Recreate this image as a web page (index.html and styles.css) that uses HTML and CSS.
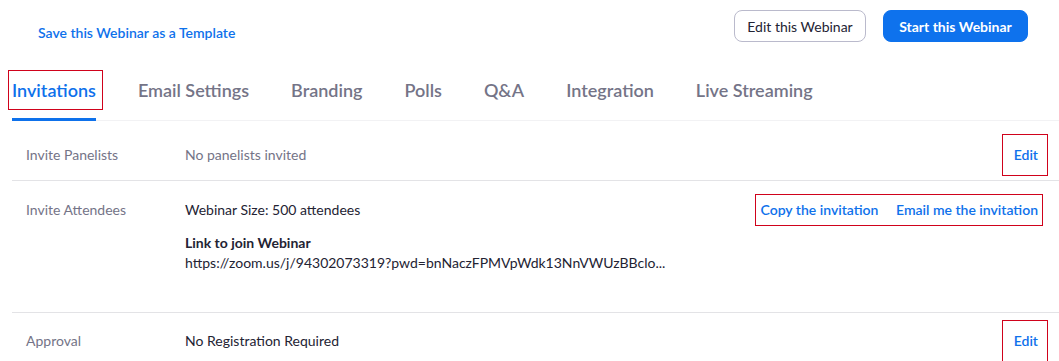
FILE: index.html
```html
<!DOCTYPE html>
<html lang="en">
<head>
  <meta charset="UTF-8">
  <meta name="viewport" content="width=device-width, initial-scale=1.0">
  <title>Webinar - Invitations</title>
  <link rel="stylesheet" href="styles.css">
</head>
<body>
  <div class="header">
    <a href="#" class="save-link">Save this Webinar as a Template</a>
    <div class="header-actions">
      <button class="btn btn-outline">Edit this Webinar</button>
      <button class="btn btn-primary">Start this Webinar</button>
    </div>
  </div>

  <div class="tabs">
    <a href="#" class="tab active"><span class="annot annot-tab">Invitations</span></a>
    <a href="#" class="tab">Email Settings</a>
    <a href="#" class="tab">Branding</a>
    <a href="#" class="tab">Polls</a>
    <a href="#" class="tab">Q&amp;A</a>
    <a href="#" class="tab">Integration</a>
    <a href="#" class="tab">Live Streaming</a>
  </div>

  <div class="row row-panelists">
    <div class="label">Invite Panelists</div>
    <div class="value muted">No panelists invited</div>
    <div class="actions"><span class="annot annot-edit"><a href="#">Edit</a></span></div>
  </div>

  <div class="row row-attendees">
    <div class="label">Invite Attendees</div>
    <div class="value">
      <div>Webinar Size: 500 attendees</div>
      <div class="join-title">Link to join Webinar</div>
      <div>https://zoom.us/j/94302073319?pwd=bnNaczFPMVpWdk13NnVWUzBBclo...</div>
    </div>
    <div class="actions">
      <span class="annot annot-links">
        <a href="#">Copy the invitation</a>
        <a href="#" class="second">Email me the invitation</a>
      </span>
    </div>
  </div>

  <div class="row row-approval">
    <div class="label">Approval</div>
    <div class="value">No Registration Required</div>
    <div class="actions"><span class="annot annot-edit"><a href="#">Edit</a></span></div>
  </div>
</body>
</html>
```

FILE: styles.css
```css
body {
  margin: 0;
  font-family: Lato, "Open Sans", Arial, sans-serif;
  font-size: 14px;
  color: #232333;
  background: #ffffff;
}

a {
  color: #0e71eb;
  text-decoration: none;
}

.header {
  display: flex;
  justify-content: space-between;
  align-items: flex-start;
  height: 52px;
  padding: 10px 31px 0 38px;
}

.save-link {
  margin-top: 15px;
  font-size: 14px;
  line-height: 16px;
  font-weight: 600;
}

.header-actions {
  display: flex;
  gap: 17px;
}

.btn {
  height: 32px;
  border-radius: 8px;
  font-family: inherit;
  font-size: 14px;
  cursor: pointer;
}

.btn-outline {
  width: 132px;
  background: #ffffff;
  border: 1px solid #babacc;
  color: #232333;
}

.btn-primary {
  width: 145px;
  background: #0e72ed;
  border: 1px solid #0e72ed;
  color: #ffffff;
  font-weight: 700;
}

.tabs {
  display: flex;
  gap: 42px;
  margin-left: 12px;
  border-bottom: 1px solid #f2f2f4;
}

.tab {
  padding: 16px 0 16px;
  line-height: 24px;
  font-size: 18px;
  font-weight: 600;
  color: #747487;
  border-bottom: 3px solid transparent;
  margin-bottom: -1px;
}

.tab.active {
  color: #0e71eb;
  border-bottom-color: #0e71eb;
}

.annot {
  display: inline-block;
  border: 1px solid #d0021b;
}

.annot-tab {
  padding: 7px 6px 7px 3px;
  margin: -8px -7px -8px -4px;
}

.row {
  display: grid;
  grid-template-columns: 159px 1fr auto;
  margin-left: 12px;
  padding: 0 21px 0 14px;
  border-bottom: 1px solid #e3e3e6;
  line-height: 20px;
}

.row-panelists {
  padding-top: 24px;
  padding-bottom: 15px;
}

.row-attendees {
  padding-top: 19px;
  padding-bottom: 39px;
}

.row-approval {
  padding-top: 18px;
  padding-bottom: 20px;
  border-bottom: none;
}

.label {
  color: #747487;
}

.muted {
  color: #747487;
}

.join-title {
  margin-top: 13px;
  font-weight: 700;
}

.actions {
  text-align: right;
}

.actions a {
  font-weight: 600;
}

.annot-edit {
  padding: 10px 9px 10px 11px;
  margin: -11px -10px -11px -12px;
}

.annot-links {
  padding: 5px 4px 5px 5px;
  margin: -6px -5px -6px -6px;
}

.annot-links .second {
  margin-left: 14px;
}
```
